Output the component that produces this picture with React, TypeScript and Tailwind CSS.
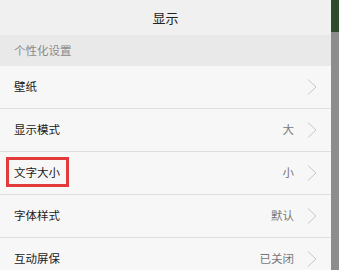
import React from "react";

const rows = [
  { label: "壁纸", value: "" },
  { label: "显示模式", value: "大" },
  { label: "文字大小", value: "小", boxed: true },
  { label: "字体样式", value: "默认" },
  { label: "互动屏保", value: "已关闭" },
];

function Chevron() {
  return (
    <svg width="10" height="16" viewBox="0 0 10 16" className="shrink-0">
      <path d="M1 0.5 L9 8 L1 15.5" fill="none" stroke="#c6c6c6" strokeWidth="1" />
    </svg>
  );
}

export default function App() {
  return (
    <div
      className="flex w-[339px] h-[270px] overflow-hidden"
      style={{ fontFamily: '"Noto Sans CJK SC", "Noto Sans", sans-serif' }}
    >
      <div className="flex flex-col w-[331px] shrink-0">
        <div className="h-[35px] shrink-0 bg-[#f0f0f0] flex items-center justify-center text-[13px] text-[#222]">
          显示
        </div>
        <div className="h-[31px] shrink-0 bg-[#e9e9e9] flex items-center pl-[14px] text-[11.5px] text-[#8a8a8a]">
          个性化设置
        </div>
        {rows.map((r) => (
          <div
            key={r.label}
            className="h-[43px] shrink-0 bg-[#f7f7f7] border-b border-[#dedede] flex items-center pl-[14px] pr-[14px]"
          >
            <div className="flex-1 flex items-center">
              <span
                className={
                  r.boxed
                    ? "relative text-[11.5px] text-[#1a1a1a] leading-none"
                    : "text-[11.5px] text-[#1a1a1a] leading-none"
                }
              >
                {r.label}
                {r.boxed && (
                  <span className="absolute left-[-8px] top-[-10px] w-[63px] h-[30px] border-[3px] border-[#e23b3b]" />
                )}
              </span>
            </div>
            {r.value && (
              <span className="text-[11.5px] text-[#777] mr-[13px] leading-none">{r.value}</span>
            )}
            <Chevron />
          </div>
        ))}
      </div>
      <div className="flex flex-col w-[8px] shrink-0">
        <div className="h-[32px] shrink-0 bg-[#2f4a2c]" />
        <div className="flex-1 bg-[#8d8d8d]" />
      </div>
    </div>
  );
}
